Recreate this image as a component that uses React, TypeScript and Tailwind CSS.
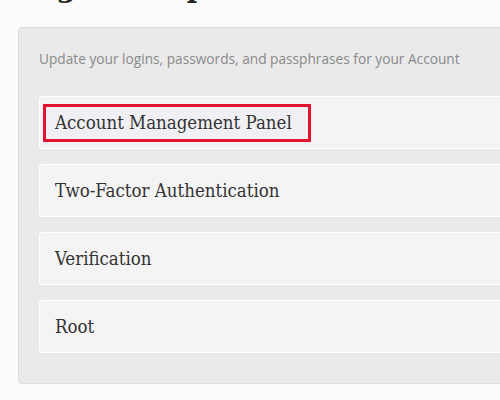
const items = ['Account Management Panel', 'Two-Factor Authentication', 'Verification', 'Root'];

const slab = { fontFamily: '"DejaVu Serif Condensed", "DejaVu Serif", serif' };

export default function App() {
  return (
    <div className="w-[500px] h-[400px] overflow-hidden bg-[#fbfbfb]">
      <div className="w-[760px] pl-[18px]">
        <h1
          className="-mt-[41px] mb-[10px] h-[58px] text-[28px] font-bold leading-[58px] text-[#222]"
          style={{ fontFamily: '"DejaVu Serif", serif' }}
        >
          Login Passphrases
        </h1>
        <div className="rounded-[4px] border border-[#dcdcdc] bg-[#eaeaea] px-[20px] pt-[20px] pb-[30px]">
          <p
            className="mb-[26px] text-[13.7px] leading-[22px] text-[#898989]"
            style={{ fontFamily: '"Open Sans", sans-serif' }}
          >
            Update your logins, passwords, and passphrases for your Account
          </p>
          <div className="flex flex-col gap-[15px]" style={slab}>
            {items.map((label, i) => (
              <div
                key={label}
                className="flex h-[53px] items-center rounded-[3px] border border-white bg-[#f4f4f4] pl-[15px]"
              >
                {i === 0 ? (
                  <span className="-ml-[12px] inline-block border-[3px] border-[#e5112f] bg-[#efeff4] py-[5px] pl-[9px] pr-[16px] text-[18.5px] leading-[22px] text-[#333]">
                    {label}
                  </span>
                ) : (
                  <span className="text-[18.5px] leading-[22px] text-[#333]">{label}</span>
                )}
              </div>
            ))}
          </div>
        </div>
      </div>
    </div>
  );
}
